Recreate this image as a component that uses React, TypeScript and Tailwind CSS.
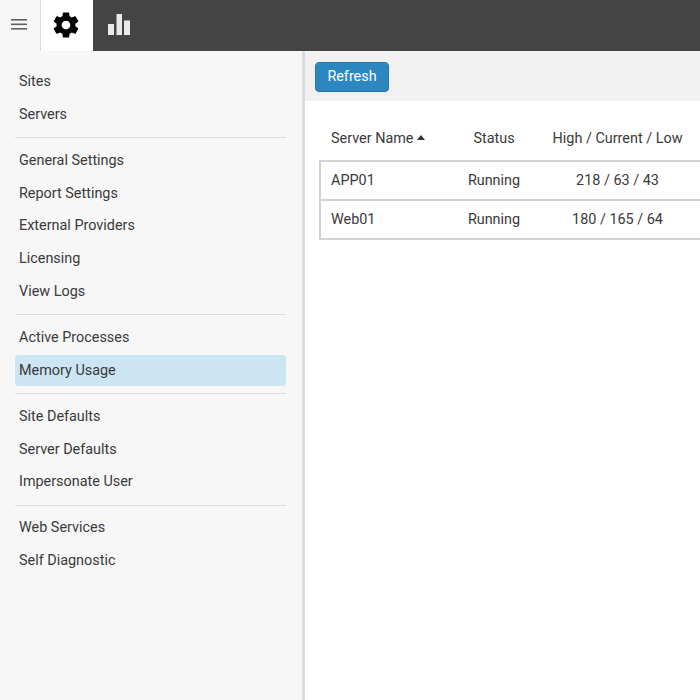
import { IoSettingsSharp } from "react-icons/io5";

const navGroups = [
  ["Sites", "Servers"],
  ["General Settings", "Report Settings", "External Providers", "Licensing", "View Logs"],
  ["Active Processes", "Memory Usage"],
  ["Site Defaults", "Server Defaults", "Impersonate User"],
  ["Web Services", "Self Diagnostic"],
];

const servers = [
  { name: "APP01", status: "Running", memory: "218 / 63 / 43" },
  { name: "Web01", status: "Running", memory: "180 / 165 / 64" },
];

function MenuIcon() {
  return (
    <svg width="16" height="11" viewBox="0 0 16 11" fill="#606060">
      <rect y="0" width="16" height="1.6" />
      <rect y="4.5" width="16" height="1.6" />
      <rect y="9" width="16" height="1.6" />
    </svg>
  );
}

function ChartIcon() {
  return (
    <svg width="22" height="21" viewBox="0 0 22 21" fill="#e9e9e9">
      <rect x="0" y="10" width="6" height="11" />
      <rect x="8.5" y="0" width="5.5" height="21" />
      <rect x="16" y="6.5" width="6" height="14.5" />
    </svg>
  );
}

export default function App() {
  return (
    <div className="flex h-[700px] w-[700px] flex-col overflow-hidden bg-white font-['Roboto',sans-serif] text-[14.4px] text-[#3a3a3a]">
      <div className="flex h-[51px] shrink-0 bg-[#444444]">
        <div className="flex w-10 items-center justify-center bg-[#f7f7f7] pb-0.5 pr-[2px]">
          <MenuIcon />
        </div>
        <div className="flex w-[53px] items-center justify-center border-l border-[#ddd] bg-white pb-px pr-[2px]">
          <IoSettingsSharp className="size-7 text-black" />
        </div>
        <div className="flex w-[51px] items-center justify-center pb-0.5">
          <ChartIcon />
        </div>
      </div>
      <div className="flex min-h-0 flex-1">
        <nav className="flex w-[305px] shrink-0 flex-col border-r-[3px] border-[#dddddd] bg-[#f7f7f7] pl-[15px] pr-4 pt-[14.5px]">
          {navGroups.map((group, i) => (
            <div key={i} className={i > 0 ? "mt-[6px] border-t border-[#dcdcdc] pt-[6px]" : ""}>
              {group.map((item) =>
                item === "Memory Usage" ? (
                  <div key={item} className="my-px flex h-[30.85px] items-center rounded-sm bg-[#cbe5f3] px-1">
                    {item}
                  </div>
                ) : (
                  <div key={item} className="flex h-[32.85px] items-center px-1">
                    {item}
                  </div>
                )
              )}
            </div>
          ))}
        </nav>
        <main className="min-w-0 flex-1">
          <div className="flex h-[50px] items-center bg-[#f1f1f1] px-2.5 pt-px">
            <button className="h-[30px] w-[74px] rounded-sm border border-[#2377ad] bg-[#2b86c1] text-white">Refresh</button>
          </div>
          <div className="pl-[14px] pt-[22px]">
            <div className="mb-[6px] flex h-[31px] w-[400px] items-center">
              <div className="flex w-[123px] items-center pl-3">
                Server Name
                <svg className="mb-0.5 ml-1" width="8" height="5" viewBox="0 0 8 5" fill="#333"><path d="M0 5 4 0l4 5z" /></svg>
              </div>
              <div className="w-[104px] text-center">Status</div>
              <div className="w-[143px] text-center">High / Current / Low</div>
            </div>
            <div className="w-[400px] border-2 border-r-0 border-[#d2d2d2]">
              {servers.map((server, i) => (
                <div
                  key={server.name}
                  className={i > 0 ? "flex h-[39px] items-center border-t-2 border-[#d2d2d2]" : "flex h-[37px] items-center"}
                >
                  <div className="w-[121px] pl-[10px]">{server.name}</div>
                  <div className="w-[104px] text-center">{server.status}</div>
                  <div className="w-[143px] text-center">{server.memory}</div>
                </div>
              ))}
            </div>
          </div>
        </main>
      </div>
    </div>
  );
}
